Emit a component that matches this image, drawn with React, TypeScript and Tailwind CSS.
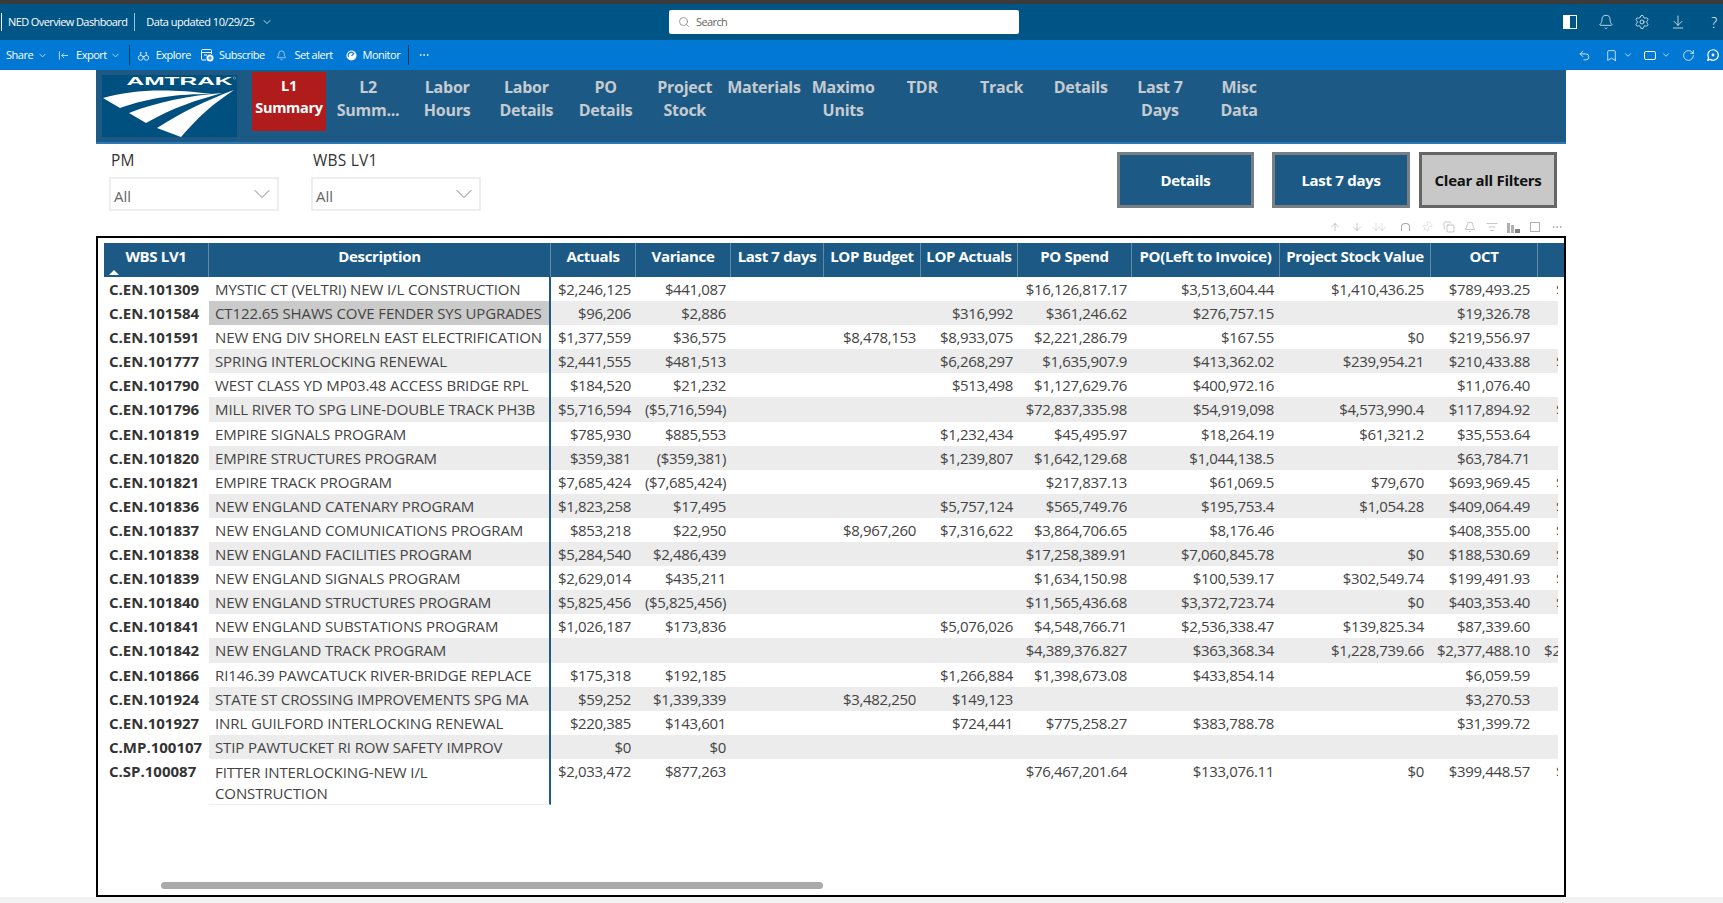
import React from 'react';
import {
  ArrowDown,
  ArrowDownToLine,
  ArrowUp,
  Bell,
  Bookmark,
  ChevronDown,
  Copy,
  Ellipsis,
  ListFilter,
  Pin,
  RotateCw,
  Search,
  Settings,
  Undo2,
} from 'lucide-react';

type Row = {
  wbs: string;
  desc: string;
  actuals?: string;
  variance?: string;
  budget?: string;
  lopActuals?: string;
  poSpend?: string;
  poLeft?: string;
  stock?: string;
  oct?: string;
  next?: string;
};

const rows: Row[] = [
  { wbs: 'C.EN.101309', desc: 'MYSTIC CT (VELTRI) NEW I/L CONSTRUCTION', actuals: '$2,246,125', variance: '$441,087', poSpend: '$16,126,817.17', poLeft: '$3,513,604.44', stock: '$1,410,436.25', oct: '$789,493.25', next: '$' },
  { wbs: 'C.EN.101584', desc: 'CT122.65 SHAWS COVE FENDER SYS UPGRADES', actuals: '$96,206', variance: '$2,886', lopActuals: '$316,992', poSpend: '$361,246.62', poLeft: '$276,757.15', oct: '$19,326.78' },
  { wbs: 'C.EN.101591', desc: 'NEW ENG DIV SHORELN EAST ELECTRIFICATION', actuals: '$1,377,559', variance: '$36,575', budget: '$8,478,153', lopActuals: '$8,933,075', poSpend: '$2,221,286.79', poLeft: '$167.55', stock: '$0', oct: '$219,556.97' },
  { wbs: 'C.EN.101777', desc: 'SPRING INTERLOCKING RENEWAL', actuals: '$2,441,555', variance: '$481,513', lopActuals: '$6,268,297', poSpend: '$1,635,907.9', poLeft: '$413,362.02', stock: '$239,954.21', oct: '$210,433.88', next: '$' },
  { wbs: 'C.EN.101790', desc: 'WEST CLASS YD MP03.48 ACCESS BRIDGE RPL', actuals: '$184,520', variance: '$21,232', lopActuals: '$513,498', poSpend: '$1,127,629.76', poLeft: '$400,972.16', oct: '$11,076.40' },
  { wbs: 'C.EN.101796', desc: 'MILL RIVER TO SPG LINE-DOUBLE TRACK PH3B', actuals: '$5,716,594', variance: '($5,716,594)', poSpend: '$72,837,335.98', poLeft: '$54,919,098', stock: '$4,573,990.4', oct: '$117,894.92', next: '$' },
  { wbs: 'C.EN.101819', desc: 'EMPIRE SIGNALS PROGRAM', actuals: '$785,930', variance: '$885,553', lopActuals: '$1,232,434', poSpend: '$45,495.97', poLeft: '$18,264.19', stock: '$61,321.2', oct: '$35,553.64' },
  { wbs: 'C.EN.101820', desc: 'EMPIRE STRUCTURES PROGRAM', actuals: '$359,381', variance: '($359,381)', lopActuals: '$1,239,807', poSpend: '$1,642,129.68', poLeft: '$1,044,138.5', oct: '$63,784.71' },
  { wbs: 'C.EN.101821', desc: 'EMPIRE TRACK PROGRAM', actuals: '$7,685,424', variance: '($7,685,424)', poSpend: '$217,837.13', poLeft: '$61,069.5', stock: '$79,670', oct: '$693,969.45', next: '$' },
  { wbs: 'C.EN.101836', desc: 'NEW ENGLAND CATENARY PROGRAM', actuals: '$1,823,258', variance: '$17,495', lopActuals: '$5,757,124', poSpend: '$565,749.76', poLeft: '$195,753.4', stock: '$1,054.28', oct: '$409,064.49', next: '$' },
  { wbs: 'C.EN.101837', desc: 'NEW ENGLAND COMUNICATIONS PROGRAM', actuals: '$853,218', variance: '$22,950', budget: '$8,967,260', lopActuals: '$7,316,622', poSpend: '$3,864,706.65', poLeft: '$8,176.46', oct: '$408,355.00', next: '$' },
  { wbs: 'C.EN.101838', desc: 'NEW ENGLAND FACILITIES PROGRAM', actuals: '$5,284,540', variance: '$2,486,439', poSpend: '$17,258,389.91', poLeft: '$7,060,845.78', stock: '$0', oct: '$188,530.69', next: '$' },
  { wbs: 'C.EN.101839', desc: 'NEW ENGLAND SIGNALS PROGRAM', actuals: '$2,629,014', variance: '$435,211', poSpend: '$1,634,150.98', poLeft: '$100,539.17', stock: '$302,549.74', oct: '$199,491.93', next: '$' },
  { wbs: 'C.EN.101840', desc: 'NEW ENGLAND STRUCTURES PROGRAM', actuals: '$5,825,456', variance: '($5,825,456)', poSpend: '$11,565,436.68', poLeft: '$3,372,723.74', stock: '$0', oct: '$403,353.40', next: '$' },
  { wbs: 'C.EN.101841', desc: 'NEW ENGLAND SUBSTATIONS PROGRAM', actuals: '$1,026,187', variance: '$173,836', lopActuals: '$5,076,026', poSpend: '$4,548,766.71', poLeft: '$2,536,338.47', stock: '$139,825.34', oct: '$87,339.60' },
  { wbs: 'C.EN.101842', desc: 'NEW ENGLAND TRACK PROGRAM', poSpend: '$4,389,376.827', poLeft: '$363,368.34', stock: '$1,228,739.66', oct: '$2,377,488.10', next: '$2' },
  { wbs: 'C.EN.101866', desc: 'RI146.39 PAWCATUCK RIVER-BRIDGE REPLACE', actuals: '$175,318', variance: '$192,185', lopActuals: '$1,266,884', poSpend: '$1,398,673.08', poLeft: '$433,854.14', oct: '$6,059.59' },
  { wbs: 'C.EN.101924', desc: 'STATE ST CROSSING IMPROVEMENTS SPG MA', actuals: '$59,252', variance: '$1,339,339', budget: '$3,482,250', lopActuals: '$149,123', oct: '$3,270.53' },
  { wbs: 'C.EN.101927', desc: 'INRL GUILFORD INTERLOCKING RENEWAL', actuals: '$220,385', variance: '$143,601', lopActuals: '$724,441', poSpend: '$775,258.27', poLeft: '$383,788.78', oct: '$31,399.72' },
  { wbs: 'C.MP.100107', desc: 'STIP PAWTUCKET RI ROW SAFETY IMPROV', actuals: '$0', variance: '$0' },
  { wbs: 'C.SP.100087', desc: 'FITTER INTERLOCKING-NEW I/L CONSTRUCTION', actuals: '$2,033,472', variance: '$877,263', poSpend: '$76,467,201.64', poLeft: '$133,076.11', stock: '$0', oct: '$399,448.57', next: '$' },
];

const navItems = [
  ['L2', 'Summ...'],
  ['Labor', 'Hours'],
  ['Labor', 'Details'],
  ['PO', 'Details'],
  ['Project', 'Stock'],
  ['Materials'],
  ['Maximo', 'Units'],
  ['TDR'],
  ['Track'],
  ['Details'],
  ['Last 7', 'Days'],
  ['Misc', 'Data'],
];

const headers = ['WBS LV1', 'Description', 'Actuals', 'Variance', 'Last 7 days', 'LOP Budget', 'LOP Actuals', 'PO Spend', 'PO(Left to Invoice)', 'Project Stock Value', 'OCT', ''];

const AmtrakLogo = () => (
  <svg viewBox="0 0 135 62" className="w-[135px] h-[62px] shrink-0">
    <rect width="135" height="62" fill="#00507f" />
    <text x="24.500" y="9.500" fontFamily="Liberation Sans, sans-serif" fontWeight="700" fontSize="11.500" fill="#fff" textLength="106" lengthAdjust="spacingAndGlyphs">AMTRAK</text>
    <circle cx="132.500" cy="3" r="1.200" fill="none" stroke="#9fc3dc" strokeWidth="0.500" />
    <path d="M1 23 C30 15 62 13 110 19 C75 19 50 22 18 33 Z" fill="#fff" />
    <path d="M27 38 C55 27 85 21 120 18 C95 25 72 32 44 48 Z" fill="#fff" />
    <path d="M55 53 C80 37 105 25 132 15 C112 28 97 41 79 62 Z" fill="#fff" />
  </svg>
);

const PanelIcon = () => (
  <svg viewBox="0 0 14 14" className="w-[14px] h-[14px] shrink-0">
    <rect x="0.5" y="0.5" width="13" height="13" fill="none" stroke="#fff" />
    <rect x="0.5" y="0.5" width="6.5" height="13" fill="#fff" />
  </svg>
);

const ChatIcon = () => (
  <svg viewBox="0 0 16 16" className="w-[14px] h-[14px] shrink-0" fill="none" stroke="#fff" strokeWidth="1.4">
    <path d="M8 2a6 6 0 1 1-3.2 11L2 14l.9-3A6 6 0 0 1 8 2Z" />
    <circle cx="8" cy="8" r="1.6" fill="#fff" stroke="none" />
  </svg>
);

const ExploreIcon = () => (
  <svg viewBox="0 0 14 14" className="w-[13px] h-[13px]" fill="none" stroke="#dbe9f7" strokeWidth="1">
    <circle cx="4" cy="9.5" r="2.6" />
    <circle cx="10" cy="9.5" r="2.6" />
    <path d="M3 4h2M9 4h2M4 4v3M10 4v3M6 8h2" />
  </svg>
);

const SubscribeIcon = () => (
  <svg viewBox="0 0 14 14" className="w-[14px] h-[14px]" fill="none" stroke="#fff" strokeWidth="1">
    <path d="M6 12H2.5a1 1 0 0 1-1-1V2.500a1 1 0 0 1 1-1h8a1 1 0 0 1 1 1V6M1.500 4.500h10M4 7h3" />
    <circle cx="10" cy="10" r="3.500" fill="#fff" stroke="none" />
    <path d="M10 8.200v3.600M8.200 10h3.600" stroke="#0078d4" />
  </svg>
);

const MonitorIcon = () => (
  <svg viewBox="0 0 12 12" className="w-[11px] h-[11px]">
    <circle cx="6" cy="6" r="5.500" fill="#fff" />
    <path d="M3 7.500A3.200 3.200 0 0 1 8.500 4L6 6.500" fill="none" stroke="#0078d4" strokeWidth="1.200" />
  </svg>
);

const ExportIcon = () => (
  <svg viewBox="0 0 12 12" className="w-[11px] h-[11px]" fill="none" stroke="#c9dff5" strokeWidth="1">
    <path d="M1.500 1.500v9M11 6H4M6.500 3.500 4 6l2.500 2.500" />
  </svg>
);

const Sep = ({ className }: { className: string }) => <div className={`w-px h-[20px] bg-[#0a3b63] ${className}`} />;

const Slicer = ({ label, className }: { label: string; className: string }) => (
  <div className={`w-[170px] ${className}`}>
    <div className="text-[15.5px] leading-[20px] text-[#333] pl-[2px] tracking-[0.2px] mt-[6px]">{label}</div>
    <div className="mt-[7px] h-[34px] border-2 border-[#eeeeee] flex items-center justify-between pl-[3px] pr-px">
      <span className="text-[15px] text-[#666] pt-[4px]">All</span>
      <ChevronDown className="w-[28px] h-[28px] text-[#666]" strokeWidth={0.7} />
    </div>
  </div>
);

const ActionButton = ({ label, className }: { label: string; className: string }) => (
  <button className={`h-[56px] border-[3px] flex items-center justify-center text-[15px] font-bold tracking-[-0.3px] ${className}`}>{label}</button>
);

const Cell = ({ value, className = 'pr-[5px]' }: { value?: string; className?: string }) => (
  <div className={`text-right whitespace-nowrap overflow-hidden tracking-[-0.35px] ${className}`}>{value}</div>
);

const DataRow = ({ row, index }: { row: Row; index: number }) => {
  const isLast = index === rows.length - 1;
  const stripe = index % 2 === 1;
  return (
    <div className={`grid grid-cols-[105px_342px_85px_95px_93px_97px_97px_114px_148px_151px_107px_20px] ${isLast ? 'h-[46px]' : 'h-[24.1px]'} text-[15px] leading-[25px] text-[#444] tracking-[-0.11px]`}>
      <div className="pl-[5px] font-bold text-[#333] bg-white whitespace-nowrap tracking-normal">{row.wbs}</div>
      <div
        className={`pl-[6px] border-r-2 border-[#1f5a85] ${index === 1 ? 'bg-[#cacaca]' : stripe ? 'bg-[#ececec]' : 'bg-white'} ${isLast ? 'leading-[21px] pt-[3px] pr-[90px] border-b border-b-[#eeeeee]' : 'whitespace-nowrap'}`}
      >
        {row.desc}
      </div>
      <div className={`col-span-10 grid grid-cols-[85px_95px_93px_97px_97px_114px_148px_151px_107px_20px] ${stripe ? 'bg-[#ececec]' : 'bg-white'}`}>
        <Cell value={row.actuals} />
        <Cell value={row.variance} />
        <Cell />
        <Cell value={row.budget} />
        <Cell value={row.lopActuals} />
        <Cell value={row.poSpend} />
        <Cell value={row.poLeft} className="pr-[6px]" />
        <Cell value={row.stock} className="pr-[7px]" />
        <Cell value={row.oct} className="pr-[8px]" />
        <div className={`overflow-hidden whitespace-nowrap ${row.next === '$2' ? 'pl-[6px]' : 'pl-[18px]'}`}>{row.next}</div>
      </div>
    </div>
  );
};

const HeaderIcon = ({ children }: { children: React.ReactNode }) => (
  <div className="w-[21.7px] flex justify-center shrink-0">{children}</div>
);

export default function App() {
  return (
    <div className="w-[1723px] h-[903px] overflow-hidden bg-white font-['Open_Sans',sans-serif] flex flex-col">
      <div className="h-[4px] bg-[#3b3b3b] shrink-0" />

      <div className="h-[36px] bg-[#005587] flex items-center text-white text-[11px] tracking-[-0.6px] shrink-0">
        <div className="w-[669px] flex items-center shrink-0">
          <div className="w-px h-[18px] bg-white ml-px" />
          <span className="ml-[6px]">NED Overview Dashboard</span>
          <div className="w-px h-[18px] bg-[#9fc3dc] ml-[7px]" />
          <span className="ml-[11px] tracking-[-0.5px]">Data updated 10/29/25</span>
          <ChevronDown className="w-[12px] h-[12px] ml-[6px]" strokeWidth={1.5} />
        </div>
        <div className="w-[350px] h-[24px] bg-white rounded-[2px] flex items-center pl-[9px] text-[#666] shrink-0">
          <Search className="w-[12px] h-[12px]" strokeWidth={1.25} />
          <span className="ml-[6px]">Search</span>
        </div>
        <div className="flex-1 flex items-center justify-end gap-[20px] pr-px">
          <div className="w-[16px] flex justify-center"><PanelIcon /></div>
          <Bell className="w-[16px] h-[16px]" strokeWidth={1.1} />
          <Settings className="w-[16px] h-[16px]" strokeWidth={1.1} />
          <ArrowDownToLine className="w-[16px] h-[16px]" strokeWidth={1.1} />
          <span className="w-[16px] text-center text-[14px] font-light">?</span>
        </div>
      </div>

      <div className="h-[30px] bg-[#0078d4] flex items-center text-white text-[11px] tracking-[-0.5px] shrink-0">
        <span className="ml-[6px]">Share</span>
        <ChevronDown className="w-[11px] h-[11px] ml-[4px]" strokeWidth={1.5} />
        <div className="ml-[10px]"><ExportIcon /></div>
        <span className="ml-[7px]">Export</span>
        <ChevronDown className="w-[11px] h-[11px] ml-[3.5px]" strokeWidth={1.5} />
        <Sep className="ml-[7.5px]" />
        <div className="ml-[7px]"><ExploreIcon /></div>
        <span className="ml-[6px]">Explore</span>
        <div className="ml-[9px]"><SubscribeIcon /></div>
        <span className="ml-[5px]">Subscribe</span>
        <Bell className="w-[11px] h-[11px] ml-[11.5px]" strokeWidth={1.25} />
        <span className="ml-[7.5px]">Set alert</span>
        <div className="ml-[13.5px]"><MonitorIcon /></div>
        <span className="ml-[5.5px]">Monitor</span>
        <Sep className="ml-[8px]" />
        <Ellipsis className="w-[12px] h-[12px] ml-[9px]" strokeWidth={1.5} />
        <div className="ml-auto flex items-center pr-[3px]">
          <Undo2 className="w-[13px] h-[13px]" strokeWidth={1.4} />
          <Bookmark className="w-[13px] h-[13px] ml-[14px]" strokeWidth={1.4} />
          <ChevronDown className="w-[10px] h-[10px] ml-[5px]" strokeWidth={1.8} />
          <div className="w-[12px] h-[9px] border border-white rounded-[2px] ml-[11px]" />
          <ChevronDown className="w-[10px] h-[10px] ml-[5px]" strokeWidth={1.8} />
          <RotateCw className="w-[13px] h-[13px] ml-[11px]" strokeWidth={1.4} />
          <div className="ml-[11px]"><ChatIcon /></div>
        </div>
      </div>

      <div className="ml-[96px] w-[1470px] flex flex-col shrink-0">
        <div className="h-[74px] bg-[#1c5a85] border-b-2 border-[#2c79b8] flex pl-[6px] pr-[6px] shrink-0">
          <div className="pt-[5px]"><AmtrakLogo /></div>
          <div className="ml-[15px] mt-[2px] h-[59px] w-[74px] bg-[#b01c1c] text-white text-[14.5px] leading-[22px] font-bold text-center pt-[3px] tracking-[-0.3px] shrink-0">
            <div>L1</div>
            <div>Summary</div>
          </div>
          <div className="flex ml-[5px] pt-[6px] gap-[5.2px]">
            {navItems.map((item, i) => (
              <div key={i} className="w-[74px] text-center text-[16px] leading-[23px] font-bold text-[#c6cbd0] tracking-[-0.25px] whitespace-nowrap">
                {item.map(line => <div key={line}>{line}</div>)}
              </div>
            ))}
          </div>
        </div>

        <div className="h-[77px] flex shrink-0">
          <Slicer label="PM" className="ml-[13px]" />
          <Slicer label="WBS LV1" className="ml-[32px]" />
          <div className="ml-auto flex items-start pt-[8px] pr-[9px]">
            <ActionButton label="Details" className="w-[137px] bg-[#1c5a85] border-[#7a7f84] text-white" />
            <ActionButton label="Last 7 days" className="w-[138px] ml-[18px] bg-[#1c5a85] border-[#7a7f84] text-white" />
            <ActionButton label="Clear all Filters" className="w-[138px] ml-[9px] bg-[#c8c8c8] border-[#666666] text-[#111]" />
          </div>
        </div>

        <div className="h-[15px] flex items-center justify-end -mr-[2px] -mt-px pb-px text-[#8f8f8f] shrink-0">
          <HeaderIcon><ArrowUp className="w-[12px] h-[12px]" strokeWidth={1} /></HeaderIcon>
          <HeaderIcon><ArrowDown className="w-[12px] h-[12px]" strokeWidth={1} /></HeaderIcon>
          <HeaderIcon>
            <div className="flex -space-x-[6px] text-[#bdbdbd]">
              <ArrowDown className="w-[12px] h-[12px]" strokeWidth={1} />
              <ArrowDown className="w-[12px] h-[12px]" strokeWidth={1} />
            </div>
          </HeaderIcon>
          <div className="w-[5px] shrink-0" />
          <HeaderIcon><div className="w-[9px] h-[8px] border border-b-0 border-[#a8a8a8] rounded-t-[4px]" /></HeaderIcon>
          <HeaderIcon><Pin className="w-[12px] h-[12px] rotate-45 text-[#c8c8c8]" strokeWidth={1} /></HeaderIcon>
          <HeaderIcon><Copy className="w-[12px] h-[12px]" strokeWidth={1} /></HeaderIcon>
          <HeaderIcon><Bell className="w-[12px] h-[12px]" strokeWidth={1} /></HeaderIcon>
          <HeaderIcon><ListFilter className="w-[12px] h-[12px]" strokeWidth={1} /></HeaderIcon>
          <HeaderIcon>
            <div className="flex items-end gap-[1px] w-[13px] h-[11px]">
              <div className="w-[3px] h-[10px] bg-[#b0b0b0]" />
              <div className="w-[3px] h-[8px] bg-[#b0b0b0]" />
              <div className="w-[5px] h-[4px] bg-[#808080]" />
            </div>
          </HeaderIcon>
          <HeaderIcon><div className="w-[10px] h-[10px] border border-[#b0b0b0]" /></HeaderIcon>
          <HeaderIcon><Ellipsis className="w-[12px] h-[12px]" strokeWidth={1.25} /></HeaderIcon>
        </div>

        <div className="relative h-[661px] mt-px border-2 border-black pt-[5px] pl-[6px] overflow-hidden shrink-0">
          <div className="grid grid-cols-[105px_342px_85px_95px_93px_97px_97px_114px_148px_151px_107px_20px] h-[34px] bg-[#1c5a85] text-white text-[15px] font-bold tracking-[-0.35px]">
            {headers.map((h, i) => (
              <div key={i} className={`relative text-center whitespace-nowrap leading-[26px] overflow-hidden ${i < 11 ? 'border-r border-[#5d8cab]' : ''}`}>
                {h}
                {i === 0 && (
                  <div className="absolute left-[5px] bottom-[2px] w-0 h-0 border-l-[5px] border-r-[5px] border-b-[5px] border-l-transparent border-r-transparent border-b-white" />
                )}
              </div>
            ))}
          </div>
          {rows.map((row, i) => <DataRow key={row.wbs} row={row} index={i} />)}
          <div className="absolute left-[63px] bottom-[6px] w-[662px] h-[7px] rounded-full bg-[#aaaaaa]" />
        </div>
      </div>

      <div className="flex-1 bg-[#f3f3f3]" />
    </div>
  );
}
